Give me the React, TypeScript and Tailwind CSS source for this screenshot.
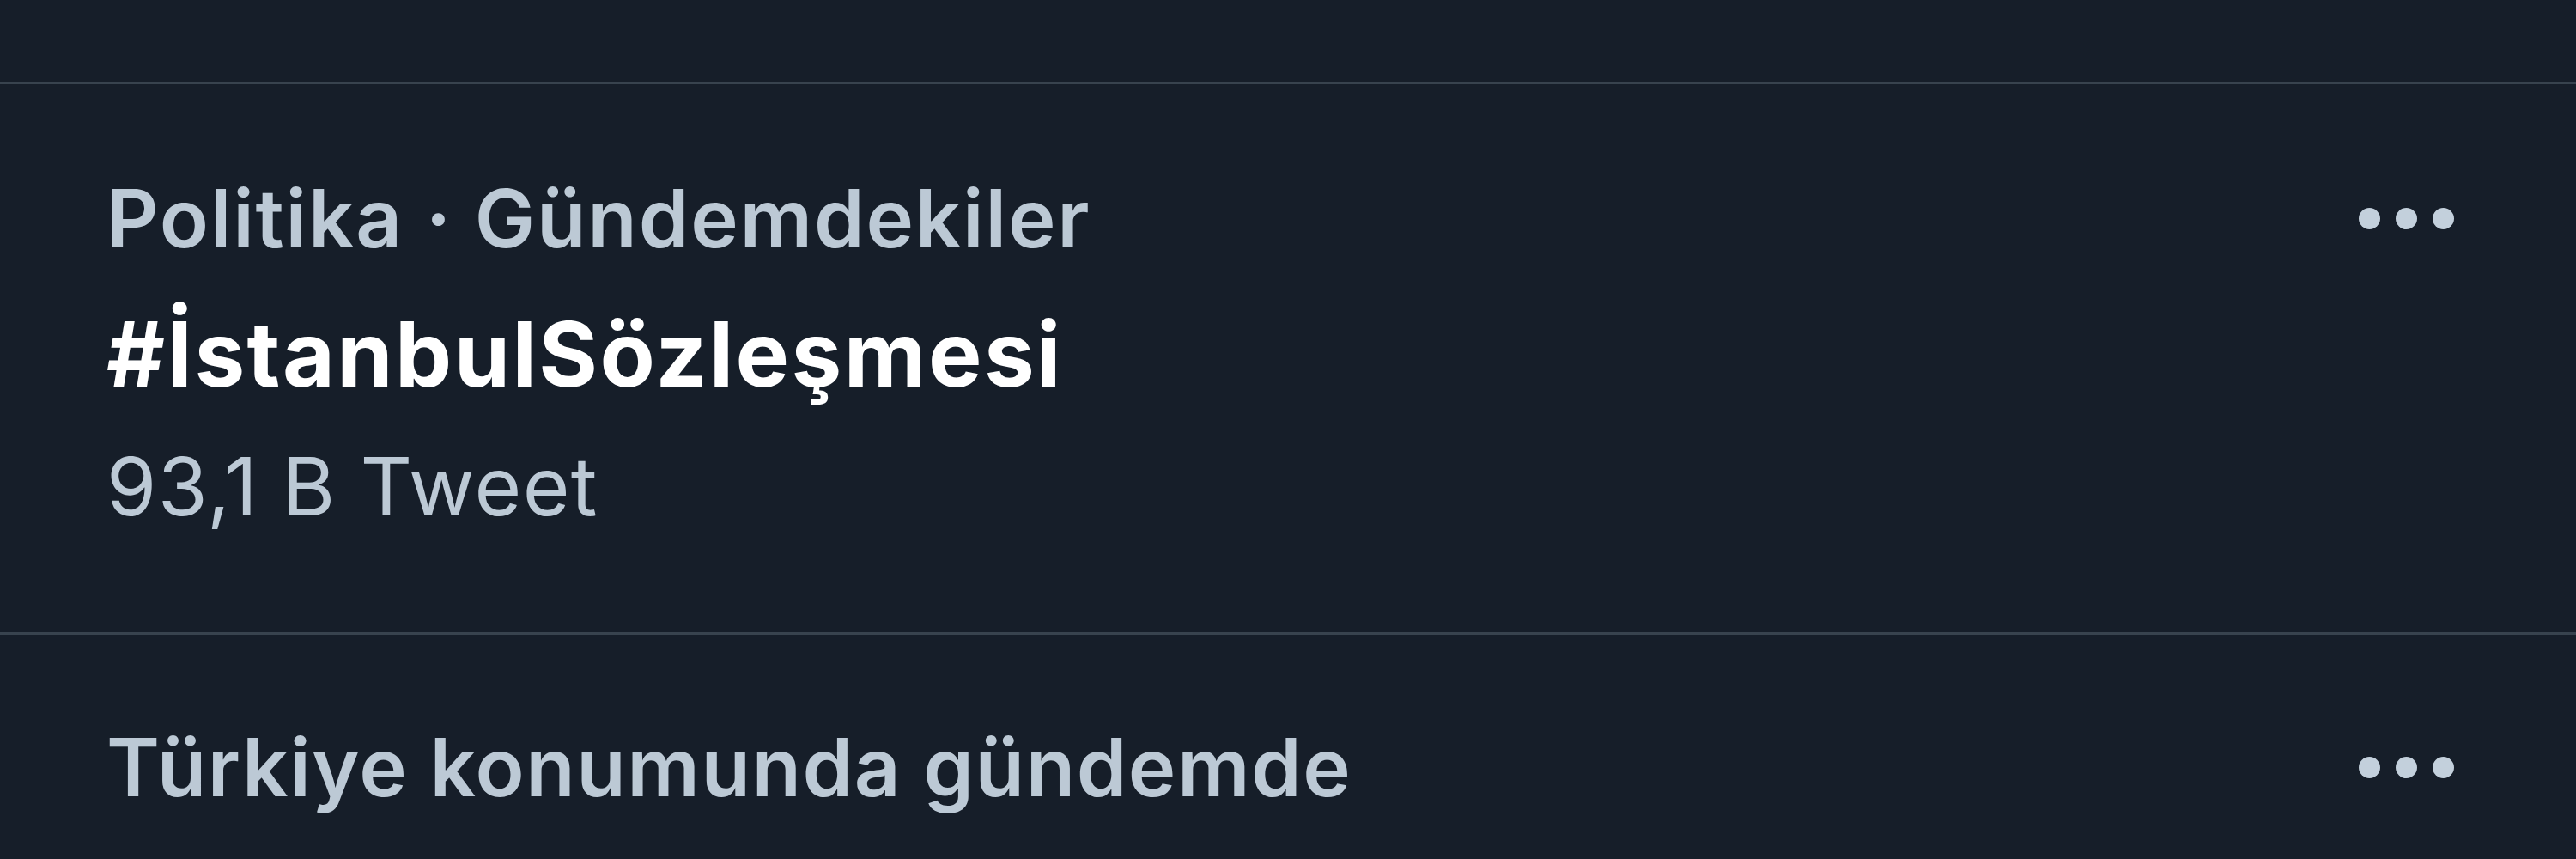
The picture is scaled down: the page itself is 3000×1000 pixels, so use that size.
const font = { fontFamily: "Inter, 'Noto Sans', sans-serif" };

function MoreDots() {
  return (
    <div className="flex h-[114px] items-center gap-[18px]">
      <span className="h-[25px] w-[25px] rounded-full bg-[#c3d0dc]" />
      <span className="h-[25px] w-[25px] rounded-full bg-[#c3d0dc]" />
      <span className="h-[25px] w-[25px] rounded-full bg-[#c3d0dc]" />
    </div>
  );
}

export default function App() {
  return (
    <div
      className="h-[1000px] w-[3000px] overflow-hidden bg-[#161e29]"
      style={font}
    >
      {/* previous row ends here */}
      <div className="h-[98px] border-b-[3px] border-[#38434e]" />

      {/* trend: Istanbul convention */}
      <div className="flex items-start justify-between border-b-[3px] border-[#38434e] pb-[113px] pl-[124px] pr-[142px] pt-[99px]">
        <div className="flex flex-col">
          <div className="text-[94px] font-semibold leading-[114px] tracking-[1.8px] text-[#bcc9d5]">
            Politika · Gündemdekiler
          </div>
          <div className="mt-[37px] text-[105px] font-bold leading-[127px] tracking-[2.4px] text-white">
            #İstanbulSözleşmesi
          </div>
          <div className="mt-[34px] text-[94px] font-normal leading-[114px] tracking-[1.4px] text-[#bcc9d5]">
            93,1 B Tweet
          </div>
        </div>
        <MoreDots />
      </div>

      {/* next trend, cut off at the bottom */}
      <div className="flex items-start justify-between pl-[124px] pr-[142px] pt-[97px]">
        <div className="flex flex-col">
          <div className="text-[94px] font-semibold leading-[114px] tracking-[1.5px] text-[#bcc9d5]">
            Türkiye konumunda gündemde
          </div>
        </div>
        <MoreDots />
      </div>
    </div>
  );
}
